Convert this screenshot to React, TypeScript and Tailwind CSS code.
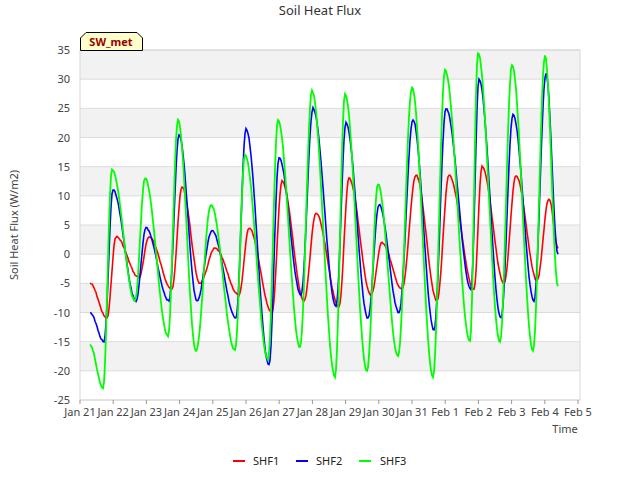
const X0 = 80;
const X1 = 580;
const Y0 = 50;
const Y1 = 400;
const yPx = (v: number) => Y0 + ((35 - v) * (Y1 - Y0)) / 60;

// [min, peak] per day, for SHF3 / SHF2 / SHF1
const mins = [103, 135, 168, 196, 235, 268, 300, 335, 367, 398, 433, 470, 500, 533];
const peaks = [112, 145, 178, 211, 245, 278, 312, 345, 378, 412, 445, 478, 512, 545];
const v3 = [[-23, 14.5], [-8, 13], [-14, 23], [-16.5, 8.5], [-16.5, 17], [-18, 23], [-16, 28], [-21, 27.5], [-20, 12], [-17.5, 28.5], [-21, 31.5], [-15, 34.5], [-15, 32.5], [-16.5, 34]];
const v2 = [[-15, 11], [-8, 4.5], [-8, 20.5], [-8, 4], [-11, 21.5], [-19, 16.5], [-7, 25], [-9, 22.5], [-11, 8.5], [-10, 23], [-13, 25], [-6, 30], [-11, 24], [-8, 31]];
const v1 = [[-11, 3], [-4, 3], [-6, 11.5], [-5, 1], [-7, 4.5], [-10, 12.5], [-8, 7], [-9, 13], [-7, 2], [-6, 13.5], [-8, 13.5], [-6, 15], [-5, 13.5], [-4.5, 9.5]];

const build = (vals: number[][], start: number, end: number, lag: number, seed: number) => {
  const keys: [number, number][] = [[90, start]];
  vals.forEach(([mn, pk], i) => {
    keys.push([mins[i] + lag, mn]);
    keys.push([peaks[i] + lag, pk]);
  });
  keys.push([558, end]);
  const pts: string[] = [];
  let s = seed;
  for (let k = 0; k < keys.length - 1; k++) {
    const [xa, ya] = keys[k];
    const [xb, yb] = keys[k + 1];
    for (let x = xa; x < xb; x += 1) {
      const t = (x - xa) / (xb - xa);
      const e = (1 - Math.cos(Math.PI * t)) / 2;
      s = (s * 9301 + 49297) % 233280;
      const j = ((s / 233280) - 0.5) * 1.4;
      pts.push(`${x},${(yPx(ya + (yb - ya) * e) + j).toFixed(1)}`);
    }
  }
  pts.push(`558,${yPx(end).toFixed(1)}`);
  return pts.join(" ");
};

const days = ["Jan 21", "Jan 22", "Jan 23", "Jan 24", "Jan 25", "Jan 26", "Jan 27", "Jan 28", "Jan 29", "Jan 30", "Jan 31", "Feb 1", "Feb 2", "Feb 3", "Feb 4", "Feb 5"];
const yTicks = [35, 30, 25, 20, 15, 10, 5, 0, -5, -10, -15, -20, -25];

export default function App() {
  return (
    <div className="w-[640px] h-[480px] bg-white font-['DejaVu_Sans',sans-serif]">
      <svg width="640" height="480" viewBox="0 0 640 480">
        <text x="320" y="15" textAnchor="middle" fontSize="13" fill="#333">Soil Heat Flux</text>
        {[35, 25, 15, 5, -5, -15].map((v) => (
          <rect key={v} x={X0} y={yPx(v)} width={X1 - X0} height={yPx(v - 5) - yPx(v)} fill="#f2f2f2" />
        ))}
        {yTicks.map((v) => (
          <g key={v}>
            <line x1={X0} x2={X1} y1={yPx(v)} y2={yPx(v)} stroke="#dcdcdc" strokeWidth="1" />
            <text x="70" y={yPx(v) + 4} textAnchor="end" fontSize="11" fill="#444">{v}</text>
          </g>
        ))}
        <rect x={X0} y={Y0} width={X1 - X0} height={Y1 - Y0} fill="none" stroke="#d8d8d8" />
        {days.map((d, i) => {
          const x = X0 + (i * (X1 - X0 - 2)) / 15;
          return (
            <g key={d}>
              <line x1={x} x2={x} y1={Y1} y2={Y1 + 4} stroke="#999" />
              <text x={x} y="416" textAnchor="middle" fontSize="11" fill="#444">{d}</text>
            </g>
          );
        })}
        <text x="565" y="433" textAnchor="middle" fontSize="11" fill="#444">Time</text>
        <text x="18" y="225" textAnchor="middle" fontSize="11" fill="#444" transform="rotate(-90 18 225)">Soil Heat Flux (W/m2)</text>
        <polyline points={build(v1, -5, 1, 4, 7)} fill="none" stroke="#ff0000" strokeWidth="1.6" />
        <polyline points={build(v2, -10, 0, 1, 13)} fill="none" stroke="#0000ff" strokeWidth="1.6" />
        <polyline points={build(v3, -15.5, -5.5, 0, 29)} fill="none" stroke="#00ff00" strokeWidth="1.8" />
        <path d="M80.5,50.5 V38 L86,32.5 H137 L142.5,38 V50.5 Z" fill="#ffffcc" stroke="#000" />
        <text x="111" y="46" textAnchor="middle" fontSize="11" fontWeight="bold" fill="#990000">SW_met</text>
        <line x1="233" x2="245" y1="461" y2="461" stroke="#ff0000" strokeWidth="2" />
        <text x="253" y="465" fontSize="11" fill="#222">SHF1</text>
        <line x1="296" x2="308" y1="461" y2="461" stroke="#0000ff" strokeWidth="2" />
        <text x="316" y="465" fontSize="11" fill="#222">SHF2</text>
        <line x1="359" x2="371" y1="461" y2="461" stroke="#00ff00" strokeWidth="2" />
        <text x="380" y="465" fontSize="11" fill="#222">SHF3</text>
      </svg>
    </div>
  );
}
